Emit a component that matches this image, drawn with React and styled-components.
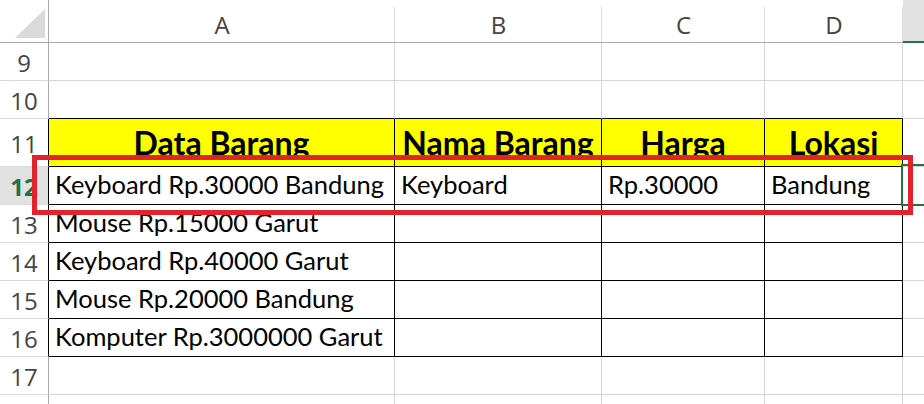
import React from 'react';
import styled, { createGlobalStyle } from 'styled-components';

const GlobalStyle = createGlobalStyle`
  html, body {
    margin: 0;
    padding: 0;
    background: #fff;
    overflow: hidden;
  }
`;

const GRID = '#d4d4d4';
const INK = '#000';
const GREEN = '#217346';

const Sheet = styled.div`
  position: relative;
  display: grid;
  grid-template-columns: 49px 346px 207px 163px 138px 140px;
  grid-template-rows: 43px 38px 38px 48px repeat(6, 38px) 38px;
  width: 924px;
  height: 404px;
  overflow: hidden;
`;

const Corner = styled.div`
  border-right: 1px solid #ababab;
  border-bottom: 1px solid #ababab;
  display: flex;
  align-items: flex-end;
  justify-content: flex-end;
  padding: 0 3px 4px 0;

  svg {
    display: block;
  }
`;

const ColHead = styled.div`
  display: flex;
  align-items: center;
  justify-content: center;
  padding-top: 6px;
  font-family: 'Open Sans', 'Noto Sans', sans-serif;
  font-size: 24px;
  color: #444;
  background: ${p => (p.$active ? '#e1e1e1' : '#fff')};
  background-image: ${p =>
    p.$active ? 'none' : 'linear-gradient(#dadada, #dadada)'};
  background-repeat: no-repeat;
  background-position: right bottom;
  background-size: 1px calc(100% - 7px);
  border-bottom: ${p => (p.$active ? `2px solid ${GREEN}` : '1px solid #ababab')};
`;

const RowHead = styled.div`
  display: flex;
  align-items: center;
  justify-content: center;
  padding-top: 2px;
  font-family: 'Open Sans', 'Noto Sans', sans-serif;
  font-size: 24px;
  font-weight: ${p => (p.$active ? 700 : 400)};
  color: ${p => (p.$active ? GREEN : '#444')};
  background: ${p => (p.$active ? '#e1e1e1' : '#fff')};
  border-bottom: 1px solid #dadada;
  border-right: 1px solid ${p => (p.$edge ? INK : '#ababab')};
`;

const Cell = styled.div`
  display: flex;
  align-items: flex-end;
  justify-content: ${p => (p.$head ? 'center' : 'flex-start')};
  padding: 0 6px 7px;
  overflow: hidden;
  white-space: nowrap;
  font-family: Lato, 'Liberation Sans', sans-serif;
  font-size: ${p => (p.$head ? '32px' : '25.5px')};
  font-weight: ${p => (p.$head ? 700 : 400)};
  line-height: 1;
  color: ${INK};
  background: ${p => (p.$head ? '#ffff00' : '#fff')};
  border-right: 1px solid ${p => p.$right};
  border-bottom: 1px solid ${p => p.$bottom};
`;

const Selection = styled.div`
  position: absolute;
  left: 901px;
  top: 164px;
  width: 40px;
  height: 38px;
  border: 2px solid ${GREEN};
  pointer-events: none;
`;

const Highlight = styled.div`
  position: absolute;
  left: 32px;
  top: 155px;
  width: 871px;
  height: 50px;
  border: 5px solid #e4222b;
  pointer-events: none;
`;

// column E is only a sliver at the right edge, its letter is out of view
const COLS = ['A', 'B', 'C', 'D', 'E'];
const SHOWN = ['A', 'B', 'C', 'D'];

const rows = [
  { n: 9 },
  { n: 10, topEdge: true },
  { n: 11, head: true, cells: ['Data Barang', 'Nama Barang', 'Harga', 'Lokasi'] },
  { n: 12, active: true, cells: ['Keyboard Rp.30000 Bandung', 'Keyboard', 'Rp.30000', 'Bandung'] },
  { n: 13, cells: ['Mouse Rp.15000 Garut'] },
  { n: 14, cells: ['Keyboard Rp.40000 Garut'] },
  { n: 15, cells: ['Mouse Rp.20000 Bandung'] },
  { n: 16, cells: ['Komputer Rp.3000000 Garut'] },
  { n: 17 },
  { n: 18, hidden: true },
];

export default function App() {
  return (
    <>
      <GlobalStyle />
      <Sheet>
        <Corner>
          <svg width="30" height="29" viewBox="0 0 30 29">
            <polygon points="30,0 30,29 0,29" fill="#dadada" />
          </svg>
        </Corner>
        {COLS.map(c => (
          <ColHead key={c} $active={c === 'E'}>
            {SHOWN.includes(c) ? c : ''}
          </ColHead>
        ))}

        {rows.map(r => {
          const inTable = r.n >= 11 && r.n <= 16;
          return (
            <React.Fragment key={r.n}>
              <RowHead $active={r.active} $edge={inTable}>
                {r.hidden ? '' : r.n}
              </RowHead>
              {COLS.map((c, i) => {
                const boxed = inTable && i < 4;
                const right = boxed ? INK : GRID;
                const bottom = boxed || (r.topEdge && i < 4) ? INK : GRID;
                return (
                  <Cell key={c} $head={r.head && i < 4} $right={right} $bottom={bottom}>
                    {r.cells ? r.cells[i] : ''}
                  </Cell>
                );
              })}
            </React.Fragment>
          );
        })}

        <Selection />
        <Highlight />
      </Sheet>
    </>
  );
}
